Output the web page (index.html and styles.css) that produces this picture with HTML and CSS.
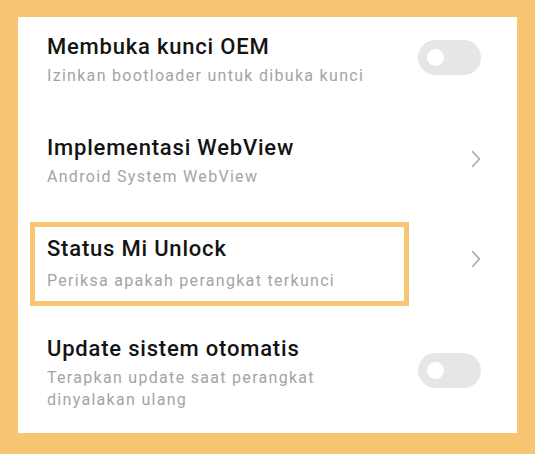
FILE: index.html
```html
<!DOCTYPE html>
<html lang="id">
<head>
<meta charset="utf-8">
<title>Pengaturan</title>
<link rel="stylesheet" href="styles.css">
</head>
<body>
<div class="panel">
  <div class="row row-first">
    <div class="text">
      <div class="title">Membuka kunci OEM</div>
      <div class="sub">Izinkan bootloader untuk dibuka kunci</div>
    </div>
    <div class="toggle"><span class="knob"></span></div>
  </div>
  <div class="row row-second">
    <div class="text">
      <div class="title">Implementasi WebView</div>
      <div class="sub">Android System WebView</div>
    </div>
    <svg class="chev" width="10" height="18" viewBox="0 0 10 18"><polyline points="1.5,1.5 8.5,9 1.5,16.5" fill="none" stroke="#a9a9a9" stroke-width="1.6" stroke-linecap="round" stroke-linejoin="round"/></svg>
  </div>
  <div class="row row-hl">
    <div class="text hl-box">
      <div class="title">Status Mi Unlock</div>
      <div class="sub sub-hl">Periksa apakah perangkat terkunci</div>
    </div>
    <svg class="chev chev-hl" width="10" height="18" viewBox="0 0 10 18"><polyline points="1.5,1.5 8.5,9 1.5,16.5" fill="none" stroke="#a9a9a9" stroke-width="1.6" stroke-linecap="round" stroke-linejoin="round"/></svg>
  </div>
  <div class="row row-last">
    <div class="text">
      <div class="title">Update sistem otomatis</div>
      <div class="sub narrow">Terapkan update saat perangkat dinyalakan ulang</div>
    </div>
    <div class="toggle"><span class="knob"></span></div>
  </div>
</div>
</body>
</html>
```
FILE: styles.css
```css
html, body {
  margin: 0;
  height: 100%;
}
body {
  background: #f8c572;
  padding: 17px 18px 21px 18px;
  box-sizing: border-box;
  font-family: Roboto, "Liberation Sans", sans-serif;
}
.panel {
  background: #ffffff;
  height: 416px;
  box-sizing: border-box;
  padding-top: 17px;
}
.row {
  display: flex;
  align-items: center;
  justify-content: space-between;
  padding: 0 36px 0 29px;
}
.row-second { margin-top: 48px; }
.row-hl { margin-top: 34px; padding-left: 12px; }
.row-last { margin-top: 30px; }
.title {
  font-size: 22px;
  line-height: 26px;
  font-weight: 500;
  letter-spacing: 0.8px;
  color: #141414;
}
.sub {
  font-size: 16px;
  line-height: 22px;
  letter-spacing: 1.3px;
  color: #a4a4a4;
  margin-top: 5px;
}
.sub-hl { margin-top: 8px; }
.narrow { width: 300px; }
.hl-box {
  width: 379px;
  box-sizing: border-box;
  border: 5px solid #f8c572;
  padding: 8.5px 12px 9.5px 12px;
}
.toggle {
  width: 63px;
  height: 35px;
  border-radius: 18px;
  background: #e6e6e6;
  display: flex;
  align-items: center;
  padding-left: 8.5px;
  box-sizing: border-box;
  margin-bottom: 6px;
}
.knob {
  width: 17px;
  height: 17px;
  border-radius: 50%;
  background: #ffffff;
}
.chev {
  display: block;
  margin-bottom: 6px;
}
.chev-hl { margin-bottom: 11px; }
```
